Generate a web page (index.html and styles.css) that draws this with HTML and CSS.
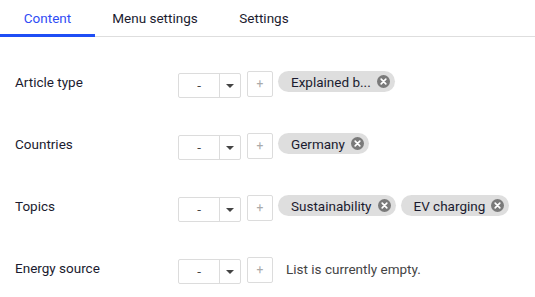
FILE: index.html
```html
<!DOCTYPE html>
<html>
<head>
<meta charset="utf-8">
<link rel="stylesheet" href="styles.css">
</head>
<body>
<div class="tabs">
  <div class="tab active">Content</div>
  <div class="tab">Menu settings</div>
  <div class="tab">Settings</div>
</div>
<div class="form">
  <div class="row">
    <div class="label">Article type</div>
    <div class="controls">
      <div class="select"><span class="val">-</span><span class="caret"></span></div>
      <div class="add">+</div>
      <div class="chip">Explained b...<span class="x"><svg viewBox="0 0 14 14" width="13" height="13"><circle cx="7" cy="7" r="7" fill="#7a7a7a"/><path d="M4.5 4.5 L9.5 9.5 M9.5 4.5 L4.5 9.5" stroke="#fff" stroke-width="1.8" stroke-linecap="round"/></svg></span></div>
    </div>
  </div>
  <div class="row">
    <div class="label">Countries</div>
    <div class="controls">
      <div class="select"><span class="val">-</span><span class="caret"></span></div>
      <div class="add">+</div>
      <div class="chip">Germany<span class="x"><svg viewBox="0 0 14 14" width="13" height="13"><circle cx="7" cy="7" r="7" fill="#7a7a7a"/><path d="M4.5 4.5 L9.5 9.5 M9.5 4.5 L4.5 9.5" stroke="#fff" stroke-width="1.8" stroke-linecap="round"/></svg></span></div>
    </div>
  </div>
  <div class="row">
    <div class="label">Topics</div>
    <div class="controls">
      <div class="select"><span class="val">-</span><span class="caret"></span></div>
      <div class="add">+</div>
      <div class="chip">Sustainability<span class="x"><svg viewBox="0 0 14 14" width="13" height="13"><circle cx="7" cy="7" r="7" fill="#7a7a7a"/><path d="M4.5 4.5 L9.5 9.5 M9.5 4.5 L4.5 9.5" stroke="#fff" stroke-width="1.8" stroke-linecap="round"/></svg></span></div>
      <div class="chip">EV charging<span class="x"><svg viewBox="0 0 14 14" width="13" height="13"><circle cx="7" cy="7" r="7" fill="#7a7a7a"/><path d="M4.5 4.5 L9.5 9.5 M9.5 4.5 L4.5 9.5" stroke="#fff" stroke-width="1.8" stroke-linecap="round"/></svg></span></div>
    </div>
  </div>
  <div class="row">
    <div class="label">Energy source</div>
    <div class="controls">
      <div class="select"><span class="val">-</span><span class="caret"></span></div>
      <div class="add">+</div>
      <div class="empty">List is currently empty.</div>
    </div>
  </div>
</div>
</body>
</html>
```
FILE: styles.css
```css
* { box-sizing: border-box; }
body {
  margin: 0;
  background: #fff;
  font-family: Roboto, "Liberation Sans", sans-serif;
  font-size: 13.5px;
  color: #1b1b2f;
}
.tabs {
  display: flex;
  height: 37px;
  border-bottom: 1px solid #dedede;
}
.tab {
  height: 37px;
  display: flex;
  align-items: center;
  justify-content: center;
  padding-bottom: 1px;
}
.tab:nth-child(1) { width: 95px; }
.tab:nth-child(2) { width: 120px; }
.tab:nth-child(3) { width: 98px; }
.tab.active {
  color: #2f4cf5;
  border-bottom: 3px solid #1f4ef5;
  padding-top: 2px;
}
.form {
  padding-top: 16px;
}
.row {
  display: flex;
  align-items: center;
  height: 62px;
}
.label {
  width: 178px;
  padding-left: 15px;
  padding-bottom: 4px;
}
.controls {
  display: flex;
  align-items: center;
}
.select {
  width: 63px;
  height: 25px;
  border: 1px solid #dcdcdc;
  border-radius: 2px;
  display: flex;
  margin-top: 2px;
}
.val {
  width: 41px;
  border-right: 1px solid #dcdcdc;
  display: flex;
  align-items: center;
  justify-content: center;
  color: #444;
}
.caret {
  flex: 1;
  display: flex;
  align-items: center;
  justify-content: center;
}
.caret::after {
  content: "";
  border-left: 4px solid transparent;
  border-right: 4px solid transparent;
  border-top: 4px solid #444;
  margin-top: 1px;
}
.add {
  width: 26px;
  height: 26px;
  margin-left: 6px;
  border: 1px solid #dcdcdc;
  border-radius: 2px;
  display: flex;
  align-items: center;
  justify-content: center;
  color: #aaa;
  font-size: 12px;
  margin-bottom: 1px;
}
.chip {
  height: 21px;
  margin-left: 5px;
  padding: 0 5px 0 13px;
  background: #dedede;
  border-radius: 11px;
  display: flex;
  align-items: center;
  gap: 6px;
  margin-bottom: 5px;
}
.chip + .chip { margin-left: 5px; }
.x { display: flex; }
.empty {
  margin-left: 13px;
  color: #444;
  margin-bottom: 3px;
}
```
